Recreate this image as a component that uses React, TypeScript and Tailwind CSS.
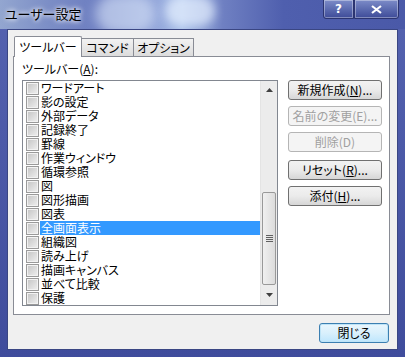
import React from "react";

const items = [
  "ワードアート",
  "影の設定",
  "外部データ",
  "記録終了",
  "罫線",
  "作業ウィンドウ",
  "循環参照",
  "図",
  "図形描画",
  "図表",
  "全画面表示",
  "組織図",
  "読み上げ",
  "描画キャンバス",
  "並べて比較",
  "保護",
];

const font = { fontFamily: '"Noto Sans CJK JP", "Noto Sans", sans-serif' };

function Checkbox() {
  return (
    <div className="w-[13px] h-[13px] border border-[#9a9a9a] bg-[#f2f2f2] flex items-center justify-center shrink-0">
      <div className="w-[9px] h-[9px] bg-gradient-to-br from-[#c8c8c8] to-[#ececec]" />
    </div>
  );
}

function Btn({ children, disabled }: { children: React.ReactNode; disabled?: boolean }) {
  return (
    <div
      className={
        "w-[94px] h-[20px] rounded-[3px] border flex items-center justify-center text-[12px] leading-[14px] whitespace-nowrap " +
        (disabled
          ? "border-[#b5b5b5] bg-[#f4f4f4] text-[#a0a0a0]"
          : "border-[#707070] bg-gradient-to-b from-[#f2f2f2] via-[#ebebeb] to-[#d6d6d6] text-black")
      }
    >
      {children}
    </div>
  );
}

export default function App() {
  return (
    <div
      style={font}
      className="w-[405px] h-[357px] flex flex-col overflow-hidden bg-gradient-to-b from-[#5563b0] to-[#3f4c9c] relative [font-feature-settings:'palt']"
    >
      {/* title bar */}
      <div className="h-[29px] relative shrink-0 bg-[linear-gradient(90deg,#93a6d0_0%,#7c8ec6_12%,#6b7cc0_25%,#8fa2d8_38%,#a9c0e8_45%,#6f80c2_55%,#4f5fae_70%,#4a59a8_100%)]">
        <div className="absolute left-[95px] top-[-6px] w-[60px] h-[40px] rounded-full bg-[#dce8fa] opacity-60 blur-[6px]" />
        <div className="absolute left-[165px] top-[-4px] w-[50px] h-[30px] rounded-full bg-[#e6f0ff] opacity-70 blur-[5px]" />
        <div className="absolute left-[5px] top-[4px] text-[13px] leading-[20px] text-black [text-shadow:0_0_6px_#fff,0_0_4px_#fff]">
          ユーザー設定
        </div>
        <div className="absolute left-[323px] top-[-1px] w-[31px] h-[20px] border border-[#2b3470] rounded-bl-[3px] bg-gradient-to-b from-[#7d8cc8] to-[#3e4b98] shadow-[inset_0_0_0_1px_rgba(255,255,255,0.35)] flex items-center justify-center text-white text-[12px] font-bold" style={{ fontFamily: '"DejaVu Sans", sans-serif' }}>
          ?
        </div>
        <div className="absolute left-[354px] top-[-1px] w-[45px] h-[20px] border border-[#2b3470] rounded-br-[3px] bg-gradient-to-b from-[#7d8cc8] to-[#3e4b98] shadow-[inset_0_0_0_1px_rgba(255,255,255,0.35)] flex items-center justify-center text-white">
          <svg width="11" height="9" viewBox="0 0 11 9">
            <path d="M1 1 L10 8 M10 1 L1 8" stroke="#fff" strokeWidth="2.2" />
          </svg>
        </div>
      </div>

      {/* client */}
      <div className="ml-[7px] mr-[7px] h-[321px] border border-[#3a4683] bg-[#f0f0f0] relative flex flex-col">
        {/* tabs */}
        <div className="flex items-end h-[26px] pl-[6px] pt-[5px] text-[12px] leading-[14px] relative z-10 whitespace-nowrap">
          <div className="w-[68px] h-[21px] bg-white border border-[#898c95] border-b-0 rounded-t-[2px] flex items-center justify-center mb-[-1px] pb-[1px]">
            ツールバー
          </div>
          <div className="w-[52px] h-[18px] bg-gradient-to-b from-[#f2f2f2] to-[#dcdcdc] border border-[#898c95] border-b-0 border-l-0 flex items-center justify-center">
            コマンド
          </div>
          <div className="w-[60px] h-[18px] bg-gradient-to-b from-[#f2f2f2] to-[#dcdcdc] border border-[#898c95] border-b-0 border-l-0 flex items-center justify-center">
            オプション
          </div>
        </div>

        {/* panel */}
        <div className="ml-[5px] w-[377px] h-[259px] border border-[#898c95] bg-white flex flex-col pl-[8px] pt-[5px]">
          <div className="text-[12px] leading-[14px] h-[18px] whitespace-nowrap">
            ツールバー(<span className="underline">A</span>):
          </div>
          <div className="flex gap-[10px]">
            {/* listbox */}
            <div className="w-[256px] h-[226px] border border-[#828790] flex bg-white">
              <div className="flex-1 flex flex-col pl-[3px]">
                {items.map((t, i) => (
                  <div key={t} className="h-[14px] flex items-center">
                    <Checkbox />
                    <div
                      className={
                        "ml-[1px] flex-1 h-[14px] text-[12px] leading-[14px] pl-[1px] whitespace-nowrap " +
                        (i === 10 ? "bg-[#3399ff] text-white" : "text-black")
                      }
                    >
                      {t}
                    </div>
                  </div>
                ))}
              </div>
              {/* scrollbar */}
              <div className="w-[17px] h-full bg-[#ececec] border-l border-[#e4e4e4] flex flex-col">
                <div className="h-[17px] flex items-center justify-center">
                  <svg width="7" height="4" viewBox="0 0 7 4">
                    <path d="M0 4 L3.5 0 L7 4 Z" fill="#404040" />
                  </svg>
                </div>
                <div className="h-[94px]" />
                <div className="mx-[1px] h-[93px] rounded-[2px] border border-[#999] bg-gradient-to-r from-[#f0f0f0] to-[#dcdcdc] flex items-center justify-center">
                  <div className="flex flex-col gap-[1px]">
                    <div className="w-[7px] h-[1px] bg-[#606060]" />
                    <div className="w-[7px] h-[1px] bg-[#606060]" />
                    <div className="w-[7px] h-[1px] bg-[#606060]" />
                    <div className="w-[7px] h-[1px] bg-[#606060]" />
                  </div>
                </div>
                <div className="flex-1 flex items-center justify-center">
                  <svg width="7" height="4" viewBox="0 0 7 4">
                    <path d="M0 0 L3.5 4 L7 0 Z" fill="#404040" />
                  </svg>
                </div>
              </div>
            </div>
            {/* buttons */}
            <div className="flex flex-col gap-[6px]">
              <Btn>
                新規作成(<span className="underline">N</span>)...
              </Btn>
              <Btn disabled>名前の変更(E)...</Btn>
              <Btn disabled>削除(D)</Btn>
              <div className="h-[2px] -mt-[6px]" />
              <Btn>
                リセット(<span className="underline">R</span>)...
              </Btn>
              <Btn>
                添付(<span className="underline">H</span>)...
              </Btn>
            </div>
          </div>
        </div>

        {/* bottom */}
        <div className="flex justify-end pr-[8px] pt-[8px]">
          <div className="w-[70px] h-[20px] rounded-[3px] border border-[#3c7fb1] bg-gradient-to-b from-[#eaf6fd] via-[#d9f0fc] to-[#bee6fd] shadow-[inset_0_0_0_1px_#bfe4f7] flex items-center justify-center text-[12px] leading-[14px]">
            閉じる
          </div>
        </div>
      </div>
    </div>
  );
}
